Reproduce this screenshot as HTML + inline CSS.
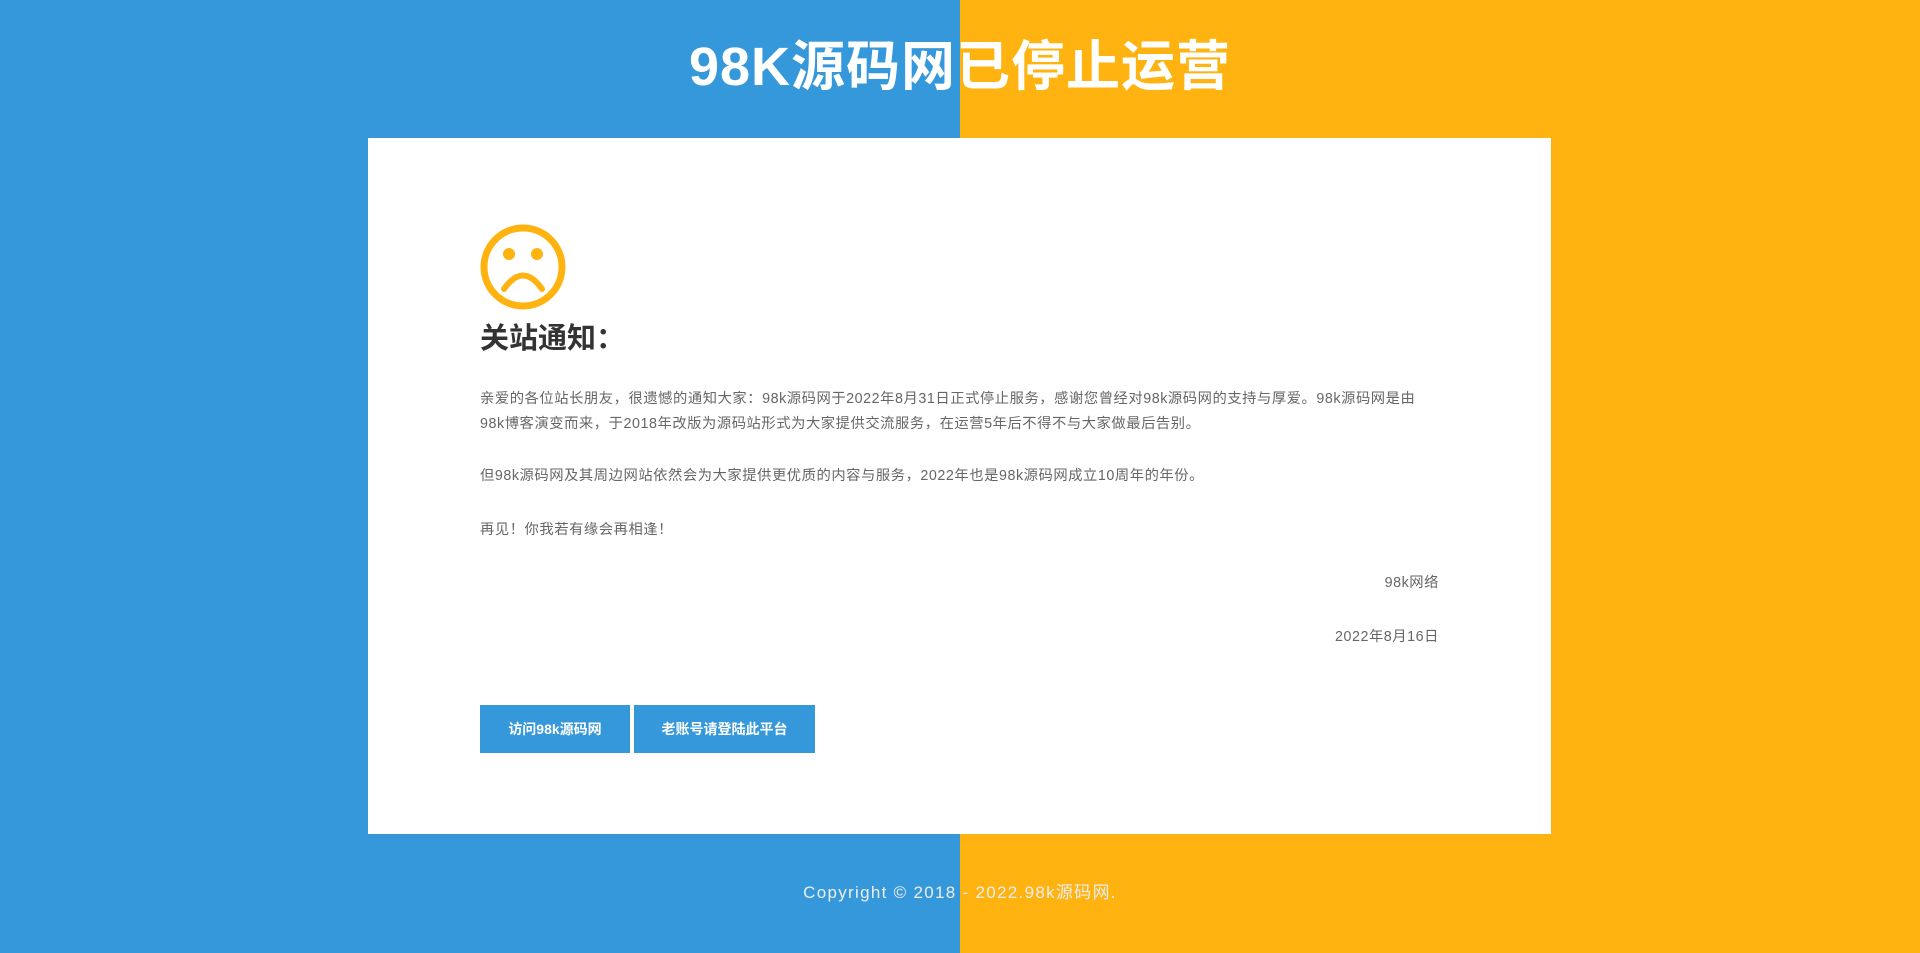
<!DOCTYPE html>
<html><head><meta charset="utf-8"><style>
*{margin:0;padding:0;box-sizing:border-box}
html,body{width:1920px;height:953px;overflow:hidden}
body{background:linear-gradient(to right,#3598db 0,#3598db 960px,#ffb311 960px);font-family:"Liberation Sans","Noto Sans CJK SC",sans-serif;position:relative}
h1{position:absolute;top:32px;left:0;width:1920px;text-align:center;color:#fff;font-size:54px;font-weight:bold;letter-spacing:1px;line-height:70px}
.card{position:absolute;left:368px;top:138px;width:1183px;height:696px;background:#fff}
.face{position:absolute;left:112px;top:86px}
h2{position:absolute;left:112px;top:181px;font-size:29px;color:#333;font-weight:bold;line-height:40px}
.p{position:absolute;left:112px;width:1000px;font-size:14.3px;color:#666;line-height:25px;white-space:nowrap;letter-spacing:0.55px}
.r{text-align:right;width:959px}
.btn{position:absolute;top:567px;height:48px;background:#3598db;color:#fff;font-weight:bold;font-size:14px;line-height:48px;text-align:center}
.foot{position:absolute;top:878px;left:0;width:1920px;text-align:center;color:#eee;font-size:17px;letter-spacing:1.3px}
</style></head><body>
<h1>98K源码网已停止运营</h1>
<div class="card">
<svg class="face" width="86" height="86" viewBox="0 0 86 86"><circle cx="43" cy="43" r="39" fill="none" stroke="#ffb311" stroke-width="7"/><circle cx="29" cy="30" r="6" fill="#ffb311"/><circle cx="57" cy="30" r="6" fill="#ffb311"/><path d="M24 65 Q43 38 62 65" fill="none" stroke="#ffb311" stroke-width="6" stroke-linecap="round"/></svg>
<h2>关站通知：</h2>
<div class="p" style="top:249px">亲爱的各位站长朋友，很遗憾的通知大家：98k源码网于2022年8月31日正式停止服务，感谢您曾经对98k源码网的支持与厚爱。98k源码网是由<br>98k博客演变而来，于2018年改版为源码站形式为大家提供交流服务，在运营5年后不得不与大家做最后告别。</div>
<div class="p" style="top:326px">但98k源码网及其周边网站依然会为大家提供更优质的内容与服务，2022年也是98k源码网成立10周年的年份。</div>
<div class="p" style="top:380px">再见！你我若有缘会再相逢！</div>
<div class="p r" style="top:433px">98k网络</div>
<div class="p r" style="top:487px">2022年8月16日</div>
<div class="btn" style="left:112px;width:150px">访问98k源码网</div>
<div class="btn" style="left:266px;width:181px">老账号请登陆此平台</div>
</div>
<div class="foot">Copyright © 2018 - 2022.98k源码网.</div>
</body></html>
